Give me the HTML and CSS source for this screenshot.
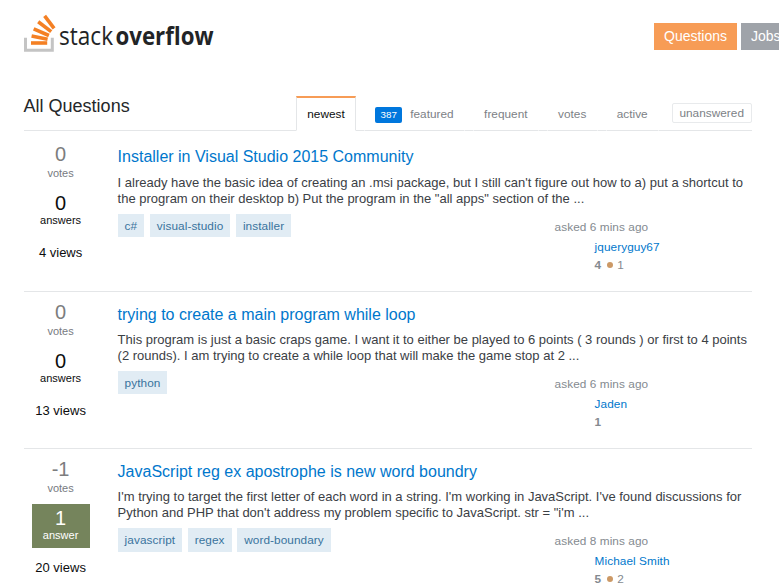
FILE: index.html
```html
<!DOCTYPE html>
<html lang="en">
<head>
<meta charset="utf-8">
<title>All Questions</title>
<link rel="stylesheet" href="styles.css">
</head>
<body>
<header class="top">
  <svg class="logo" width="200" height="42" viewBox="0 0 200 42" role="img" aria-label="stack overflow">
    <path d="M1.5 24.7V37.2H28.3V24.7" fill="none" stroke="#c4c4c4" stroke-width="3"/>
    <g stroke="#f48024" stroke-width="3.6" fill="none">
      <path d="M7 30H23.2"/>
      <path d="M7.6 22.9L23.6 26.2"/>
      <path d="M9.7 15.8L24.9 22.5"/>
      <path d="M14.2 8.8L27.2 18.6"/>
      <path d="M20.6 2.8L30.1 15.4"/>
    </g>
    <text class="logo-light" x="35" y="32" textLength="54" lengthAdjust="spacingAndGlyphs">stack</text>
    <text class="logo-bold" x="91.5" y="32" textLength="98" lengthAdjust="spacingAndGlyphs">overflow</text>
  </svg>
  <nav class="nav">
    <a class="nav-item current">Questions</a>
    <a class="nav-item">Jobs</a>
  </nav>
</header>
<main class="content">
  <div class="subheader">
    <h1>All Questions</h1>
    <nav class="tabs">
      <a class="tab selected">newest</a>
      <a class="tab"><span class="count">387</span>featured</a>
      <a class="tab">frequent</a>
      <a class="tab">votes</a>
      <a class="tab">active</a>
      <a class="unanswered">unanswered</a>
    </nav>
  </div>
  <section class="questions">
    <article class="question">
      <div class="stats">
        <div class="votes"><b>0</b><span>votes</span></div>
        <div class="answers"><b>0</b><span>answers</span></div>
        <div class="views">4 views</div>
      </div>
      <div class="summary">
        <h2>Installer in Visual Studio 2015 Community</h2>
        <p>I already have the basic idea of creating an .msi package, but I still can't figure out how to a) put a shortcut to<br>the program on their desktop b) Put the program in the "all apps" section of the ...</p>
        <div class="foot">
          <div class="tags"><a>c#</a><a>visual-studio</a><a>installer</a></div>
          <div class="asked"><div>asked 6 mins ago</div><div class="user"><a>jqueryguy67</a><div class="rep"><b>4</b><i></i>1</div></div></div>
        </div>
      </div>
    </article>
    <article class="question">
      <div class="stats">
        <div class="votes"><b>0</b><span>votes</span></div>
        <div class="answers"><b>0</b><span>answers</span></div>
        <div class="views">13 views</div>
      </div>
      <div class="summary">
        <h2>trying to create a main program while loop</h2>
        <p>This program is just a basic craps game. I want it to either be played to 6 points ( 3 rounds ) or first to 4 points<br>(2 rounds). I am trying to create a while loop that will make the game stop at 2 ...</p>
        <div class="foot">
          <div class="tags"><a>python</a></div>
          <div class="asked"><div>asked 6 mins ago</div><div class="user"><a>Jaden</a><div class="rep"><b>1</b></div></div></div>
        </div>
      </div>
    </article>
    <article class="question">
      <div class="stats">
        <div class="votes"><b>-1</b><span>votes</span></div>
        <div class="answers answered"><b>1</b><span>answer</span></div>
        <div class="views">20 views</div>
      </div>
      <div class="summary">
        <h2>JavaScript reg ex apostrophe is new word boundry</h2>
        <p>I'm trying to target the first letter of each word in a string. I'm working in JavaScript. I've found discussions for<br>Python and PHP that don't address my problem specific to JavaScript. str = "i'm ...</p>
        <div class="foot">
          <div class="tags"><a>javascript</a><a>regex</a><a>word-boundary</a></div>
          <div class="asked"><div>asked 8 mins ago</div><div class="user"><a>Michael Smith</a><div class="rep"><b>5</b><i></i>2</div></div></div>
        </div>
      </div>
    </article>
  </section>
</main>
</body>
</html>
```
FILE: styles.css
```css
* { box-sizing: border-box; }
html { overflow: hidden; }
body {
  margin: 0;
  height: 583px;
  overflow: hidden;
  background: #fff;
  color: #242729;
  font-family: "Liberation Sans", Arial, sans-serif;
  font-size: 13px;
}
.top {
  display: flex;
  justify-content: space-between;
  align-items: flex-start;
  height: 96px;
  padding: 13px 0 0 24px;
}
.logo { display: block; }
.logo-light, .logo-bold { font-family: "Open Sans", sans-serif; font-size: 25px; fill: #222426; }
.logo-bold { font-weight: 700; }
.nav { display: flex; gap: 4px; width: 125px; padding-top: 10px; }
.nav-item {
  flex: none;
  height: 27px;
  padding: 0 10px;
  background: #9fa3a9;
  color: #fff;
  font-size: 14px;
  line-height: 27px;
}
.nav-item.current { width: 83px; background: #f79c56; }
.content { width: 728.4px; margin-left: 23.6px; }
.subheader {
  display: flex;
  justify-content: space-between;
  height: 35px;
  border-bottom: 1px solid #e4e6e8;
}
h1 { margin: 0; font-size: 18px; font-weight: 400; line-height: 21px; }
.tabs { display: flex; gap: 8px; height: 35px; font-size: 11.8px; letter-spacing: 0.03px; color: #7c8186; }
.tab {
  height: 35px;
  padding: 9px 10.2px 0;
  border: 1px solid #fff;
  border-bottom-color: #e4e6e8;
  line-height: 16px;
}
.tab.selected {
  padding-top: 8px;
  border-color: #e4e6e8;
  border-top: 2px solid #f79c56;
  border-bottom-color: #fff;
  color: #0c0d0e;
}
.count {
  display: inline-block;
  height: 16px;
  margin-right: 8px;
  padding: 0 5.3px;
  border-radius: 2px;
  background: #0077dd;
  color: #fff;
  font-size: 9.75px;
}
.unanswered {
  height: 20px;
  margin: 7px 0 0 5px;
  padding: 0 7px 0 6.5px;
  border: 1px solid #e8eaec;
  border-radius: 2px;
  line-height: 18px;
}
.questions { padding-top: 3.6px; }
.question { display: flex; height: 157.4px; border-bottom: 1px solid #e4e6e8; }
.stats { width: 58px; margin: 0 28px 0 8px; padding-top: 8.7px; text-align: center; }
.stats b, .stats span { display: block; font-weight: 400; }
.stats b { font-size: 20px; line-height: 23px; }
.stats span { font-size: 11px; line-height: 15px; }
.votes { height: 46px; color: #777b7f; }
.votes b { color: #7c7d7e; }
.answers { height: 44px; padding-top: 3px; color: #0c0d0e; }
.stats .answers span { line-height: 11px; }
.answered { background: #75845c; color: #fff; }
.views { margin-top: 12px; line-height: 16px; color: #0c0d0e; white-space: nowrap; }
.summary { width: 634px; padding-top: 12.7px; }
h2 { margin: 0; color: #0077cc; font-size: 16px; font-weight: 400; line-height: 20px; }
p { margin: 7.3px 0 0; color: #3b4045; line-height: 16px; white-space: nowrap; }
.foot { display: flex; justify-content: space-between; padding-top: 7px; font-size: 11.8px; letter-spacing: 0.07px; }
.tags { display: flex; align-items: flex-start; gap: 5.6px; }
.tags a { height: 23.3px; padding: 0 7px; background: #e1ecf4; color: #39739d; line-height: 24.6px; }
.asked { width: 197px; padding-top: 5px; color: #848a90; line-height: 16px; }
.user { padding: 4px 0 0 40px; }
.user a { display: block; color: #0077cc; }
.rep { display: flex; align-items: center; height: 16px; margin-top: 2px; }
.rep i { width: 6px; height: 6px; margin: 0 4px 0 6px; border-radius: 50%; background: #cc9966; }
```
